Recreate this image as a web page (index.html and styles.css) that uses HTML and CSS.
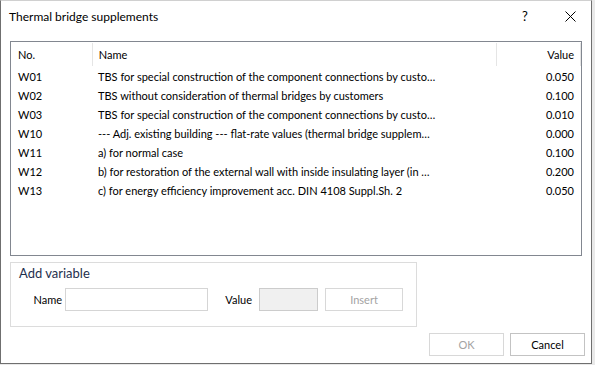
FILE: index.html
```html
<!DOCTYPE html>
<html lang="en">
  <head>
    <meta charset="UTF-8" />
    <meta name="viewport" content="width=device-width, initial-scale=1.0" />
    <title>Thermal bridge supplements</title>
    <link rel="stylesheet" href="styles.css">
  </head>
  <body>
    <div class="window">
      <!-- title bar -->
      <div class="titlebar">
        <span class="title">Thermal bridge supplements</span>
        <span class="help">?</span>
        <span class="close">
          <svg width="11" height="11" viewBox="0 0 11 11">
            <path d="M0.5 0.5 L10.5 10.5 M10.5 0.5 L0.5 10.5" stroke="#000" stroke-width="1" fill="none" />
          </svg>
        </span>
      </div>

      <div class="content">
        <!-- list of variables -->
        <div class="list">
          <div class="row head">
            <div class="col no">No.</div>
            <div class="col name">Name</div>
            <div class="col value">Value</div>
          </div>
          <div class="row">
            <div class="col no">W01</div>
            <div class="col name">TBS for special construction of the component connections by custo…</div>
            <div class="col value">0.050</div>
          </div>
          <div class="row">
            <div class="col no">W02</div>
            <div class="col name">TBS without consideration of thermal bridges by customers</div>
            <div class="col value">0.100</div>
          </div>
          <div class="row">
            <div class="col no">W03</div>
            <div class="col name">TBS for special construction of the component connections by custo…</div>
            <div class="col value">0.010</div>
          </div>
          <div class="row">
            <div class="col no">W10</div>
            <div class="col name">--- Adj. existing building --- flat-rate values (thermal bridge supplem…</div>
            <div class="col value">0.000</div>
          </div>
          <div class="row">
            <div class="col no">W11</div>
            <div class="col name">a) for normal case</div>
            <div class="col value">0.100</div>
          </div>
          <div class="row">
            <div class="col no">W12</div>
            <div class="col name">b) for restoration of the external wall with inside insulating layer (in …</div>
            <div class="col value">0.200</div>
          </div>
          <div class="row">
            <div class="col no">W13</div>
            <div class="col name">c) for energy efficiency improvement acc. DIN 4108 Suppl.Sh. 2</div>
            <div class="col value">0.050</div>
          </div>
        </div>

        <!-- add variable group -->
        <div class="group">
          <div class="group-title">Add variable</div>
          <div class="group-body">
            <label class="lbl lbl-name">Name</label>
            <div class="input name-input"></div>
            <label class="lbl lbl-value">Value</label>
            <div class="input value-input"></div>
            <button class="btn insert" disabled>Insert</button>
          </div>
        </div>

        <div class="footer">
          <button class="btn ok" disabled>OK</button>
          <button class="btn cancel">Cancel</button>
        </div>
      </div>
    </div>
  </body>
</html>
```

FILE: styles.css
```css
body {
  margin: 0;
  background-color: #e9e9e9;
  font-family: Lato, "Noto Sans", sans-serif;
  font-size: 11px;
  color: #000;
}

.window {
  width: 592px;
  height: 364px;
  box-sizing: border-box;
  background-color: #fff;
  border: 1px solid #6f6f6f;
  border-top-color: #d0d0d0;
}

.titlebar {
  height: 30px;
  display: flex;
  align-items: center;
}

.title {
  flex: 1;
  padding-left: 8px;
  font-size: 12px;
}

.help {
  width: 12px;
  font-size: 13px;
  margin-right: 31px;
}

.close {
  display: flex;
  margin-right: 15px;
}

.content {
  padding: 10px 9px 0 9px;
}

.list {
  height: 215px;
  box-sizing: border-box;
  border: 1px solid #828790;
}

.row {
  display: flex;
  height: 19px;
  align-items: center;
}

.row.head {
  height: 25px;
}

.col {
  white-space: nowrap;
  overflow: hidden;
}

.col.no {
  width: 74px;
  padding-left: 7px;
}

.col.name {
  width: 399px;
  padding-left: 6px;
}

.col.value {
  width: 77px;
  padding-right: 6px;
  text-align: right;
  font-variant-numeric: tabular-nums;
}

.head .col {
  height: 23px;
  line-height: 23px;
  border-right: 1px solid #e5e5e5;
}

.group {
  margin-top: 6px;
  width: 407px;
  height: 65px;
  box-sizing: border-box;
  border: 1px solid #dcdcdc;
}

.group-title {
  padding: 2px 0 0 8px;
  font-size: 13px;
  color: #1e2f4d;
}

.group-body {
  display: flex;
  align-items: center;
  margin-top: 7px;
}

.lbl {
  width: 51px;
  text-align: right;
  margin-right: 3px;
}

.lbl-value {
  width: 44px;
  margin-right: 7px;
}

.input {
  height: 23px;
  box-sizing: border-box;
  border: 1px solid #d5d5d5;
}

.name-input {
  width: 143px;
}

.value-input {
  width: 59px;
  background-color: #f0f0f0;
  border-color: #cccccc;
}

.btn {
  font-family: Lato, "Noto Sans", sans-serif;
  font-size: 11px;
  height: 23px;
  box-sizing: border-box;
  background-color: #fff;
  border: 1px solid #cfcfcf;
  color: #000;
  padding: 0;
}

.btn:disabled {
  color: #a3a3a3;
  border-color: #d8d8d8;
}

.insert {
  width: 78px;
  margin-left: 7px;
}

.footer {
  display: flex;
  justify-content: flex-end;
  gap: 6px;
  margin-top: 6px;
  margin-right: -3px;
}

.ok,
.cancel {
  width: 75px;
}

.cancel {
  border-color: #c3c3c3;
}
```
